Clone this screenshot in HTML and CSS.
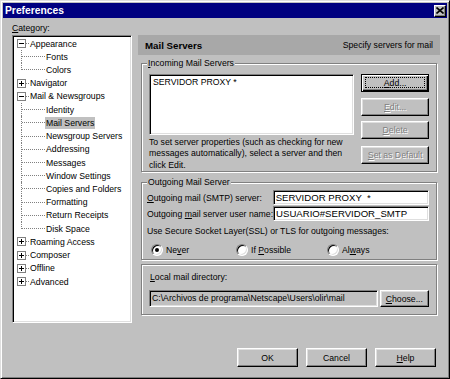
FILE: index.html
```html
<!DOCTYPE html>
<html lang="en">
<head>
    <meta charset="UTF-8">
    <title>Preferences</title>
    <link rel="stylesheet" href="styles.css">
</head>
<body>
    <div class="window">
        <div class="titlebar">
            <span class="title">Preferences</span>
            <span class="close-btn">
                <svg width="8" height="7" viewBox="0 0 8 7"><path d="M0.5 0.5l7 6M7.5 0.5l-7 6" stroke="#000" stroke-width="1.6"/></svg>
            </span>
        </div>

        <div class="content">
            <div class="sidebar">
                <div class="cat-label"><u>C</u>ategory:</div>
                <ul class="tree">
                    <li>
                        <div class="row"><svg class="box" width="9" height="9"><rect x=".5" y=".5" width="8" height="8" fill="#fff" stroke="#808080"/><path d="M2 4.5h5" stroke="#000"/></svg><span class="dash"></span><span class="lbl">Appearance</span></div>
                        <ul class="kids">
                            <li class="row"><span class="conn"><i></i></span><span class="lbl">Fonts</span></li>
                            <li class="row"><span class="conn"><i></i></span><span class="lbl">Colors</span></li>
                        </ul>
                    </li>
                    <li>
                        <div class="row"><svg class="box" width="9" height="9"><rect x=".5" y=".5" width="8" height="8" fill="#fff" stroke="#808080"/><path d="M2 4.5h5M4.5 2v5" stroke="#000"/></svg><span class="dash"></span><span class="lbl">Navigator</span></div>
                    </li>
                    <li>
                        <div class="row"><svg class="box" width="9" height="9"><rect x=".5" y=".5" width="8" height="8" fill="#fff" stroke="#808080"/><path d="M2 4.5h5" stroke="#000"/></svg><span class="dash"></span><span class="lbl">Mail &amp; Newsgroups</span></div>
                        <ul class="kids">
                            <li class="row"><span class="conn"><i></i></span><span class="lbl">Identity</span></li>
                            <li class="row"><span class="conn"><i></i></span><span class="lbl selected">Mail Servers</span></li>
                            <li class="row"><span class="conn"><i></i></span><span class="lbl">Newsgroup Servers</span></li>
                            <li class="row"><span class="conn"><i></i></span><span class="lbl">Addressing</span></li>
                            <li class="row"><span class="conn"><i></i></span><span class="lbl">Messages</span></li>
                            <li class="row"><span class="conn"><i></i></span><span class="lbl">Window Settings</span></li>
                            <li class="row"><span class="conn"><i></i></span><span class="lbl">Copies and Folders</span></li>
                            <li class="row"><span class="conn"><i></i></span><span class="lbl">Formatting</span></li>
                            <li class="row"><span class="conn"><i></i></span><span class="lbl">Return Receipts</span></li>
                            <li class="row"><span class="conn"><i></i></span><span class="lbl">Disk Space</span></li>
                        </ul>
                    </li>
                    <li>
                        <div class="row"><svg class="box" width="9" height="9"><rect x=".5" y=".5" width="8" height="8" fill="#fff" stroke="#808080"/><path d="M2 4.5h5M4.5 2v5" stroke="#000"/></svg><span class="dash"></span><span class="lbl">Roaming Access</span></div>
                    </li>
                    <li>
                        <div class="row"><svg class="box" width="9" height="9"><rect x=".5" y=".5" width="8" height="8" fill="#fff" stroke="#808080"/><path d="M2 4.5h5M4.5 2v5" stroke="#000"/></svg><span class="dash"></span><span class="lbl">Composer</span></div>
                    </li>
                    <li>
                        <div class="row"><svg class="box" width="9" height="9"><rect x=".5" y=".5" width="8" height="8" fill="#fff" stroke="#808080"/><path d="M2 4.5h5M4.5 2v5" stroke="#000"/></svg><span class="dash"></span><span class="lbl">Offline</span></div>
                    </li>
                    <li>
                        <div class="row"><svg class="box" width="9" height="9"><rect x=".5" y=".5" width="8" height="8" fill="#fff" stroke="#808080"/><path d="M2 4.5h5M4.5 2v5" stroke="#000"/></svg><span class="dash"></span><span class="lbl">Advanced</span></div>
                    </li>
                </ul>
            </div>

            <div class="main">
                <div class="page-head">
                    <span class="page-title">Mail Servers</span>
                    <span class="page-desc">Specify servers for mail</span>
                </div>

                <div class="group incoming">
                    <div class="legend"><u>I</u>ncoming Mail Servers</div>
                    <div class="incoming-body">
                        <div class="incoming-left">
                            <div class="listbox">SERVIDOR PROXY *</div>
                            <p class="hint">To set server properties (such as checking for new messages automatically), select a server and then click Edit.</p>
                        </div>
                        <div class="side-buttons">
                            <div class="btn default btn-add"><span class="focus"><span><u>A</u>dd...</span></span></div>
                            <div class="btn disabled btn-edit"><span><u>E</u>dit...</span></div>
                            <div class="btn disabled btn-delete"><span><u>D</u>elete</span></div>
                            <div class="btn disabled btn-setdef"><span><u>S</u>et as Default</span></div>
                        </div>
                    </div>
                </div>

                <div class="group outgoing">
                    <div class="legend">Outgoing Mail Server</div>
                    <div class="field-row first">
                        <span class="field-label"><u>O</u>utgoing mail (SMTP) server:</span>
                        <span class="textbox">SERVIDOR PROXY &nbsp;*</span>
                    </div>
                    <div class="field-row">
                        <span class="field-label">Outgoing <u>m</u>ail server user name:</span>
                        <span class="textbox">USUARIO#SERVIDOR_SMTP</span>
                    </div>
                    <div class="ssl-text">Use Secure Socket Layer(SSL) or TLS for outgoing messages:</div>
                    <div class="radio-row">
                        <span class="radio-opt opt-never"><span class="radio checked"><span class="dot"></span></span><span>Ne<u>v</u>er</span></span>
                        <span class="radio-opt opt-possible"><span class="radio"></span><span>If <u>P</u>ossible</span></span>
                        <span class="radio-opt"><span class="radio"></span><span>Al<u>w</u>ays</span></span>
                    </div>
                </div>

                <div class="group local">
                    <div class="local-label"><u>L</u>ocal mail directory:</div>
                    <div class="local-row">
                        <span class="pathbox">C:\Archivos de programa\Netscape\Users\olir\mail</span>
                        <div class="btn btn-choose"><span><u>C</u>hoose...</span></div>
                    </div>
                </div>
            </div>
        </div>

        <div class="footer">
            <div class="btn btn-foot">OK</div>
            <div class="btn btn-foot">Cancel</div>
            <div class="btn btn-foot"><span><u>H</u>elp</span></div>
        </div>
    </div>
</body>
</html>
```

FILE: styles.css
```css
* {
    box-sizing: border-box;
}

body {
    margin: 0;
    background-color: #c0c0c0;
    font-family: 'Liberation Sans', Arial, sans-serif;
    font-size: 8.7px;
    color: #000;
}

u {
    text-decoration-thickness: 1px;
    text-underline-offset: 1px;
}

.window {
    width: 450px;
    height: 379px;
    border: 1px solid;
    border-color: #dfdfdf #000 #000 #dfdfdf;
    box-shadow: inset 1px 1px #fff, inset -1px -1px #808080;
    padding: 2px;
    display: flex;
    flex-direction: column;
}

/* title bar */
.titlebar {
    height: 15px;
    background-color: #000080;
    display: flex;
    align-items: center;
    justify-content: space-between;
    padding: 0 1px 0 2px;
}

.title {
    color: #fff;
    font-weight: bold;
    font-size: 10.3px;
}

.close-btn {
    width: 12px;
    height: 12px;
    background-color: #c0c0c0;
    border: 1px solid;
    border-color: #fff #000 #000 #fff;
    box-shadow: inset -1px -1px #808080;
    display: flex;
    align-items: center;
    justify-content: center;
}

.content {
    display: flex;
    padding-left: 9px;
    height: 305px;
}

/* category tree */
.sidebar {
    width: 120px;
}

.cat-label {
    height: 17px;
    padding-top: 4px;
    line-height: 12px;
}

.tree {
    list-style: none;
    margin: 0;
    padding: 0;
    height: 288px;
    background-color: #fff;
    border: 1px solid;
    border-color: #808080 #fff #fff #808080;
    box-shadow: inset 1px 1px #000, inset -1px -1px #dfdfdf;
    padding-top: 1px;
    padding-left: 1px;
}

.tree ul {
    list-style: none;
    margin: 0;
    padding: 0;
}

.row {
    height: 13.22px;
    display: flex;
    align-items: center;
    white-space: nowrap;
}

.box {
    margin-left: 3px;
    flex: none;
}

.dash {
    width: 3px;
    border-top: 1px dotted #808080;
}

.lbl {
    padding: 0 1px;
    line-height: 12px;
}

.lbl.selected {
    background-color: #c0c0c0;
}

.conn {
    margin-left: 7px;
    width: 24px;
    height: 100%;
    border-left: 1px dotted #808080;
    align-self: flex-start;
}

.conn i {
    display: block;
    height: 7px;
    border-bottom: 1px dotted #808080;
}

.kids li:last-child .conn {
    height: 7px;
}

/* right side */
.main {
    margin-left: 6px;
    width: 302px;
    padding-top: 17px;
}

.page-head {
    height: 20px;
    background-color: #a8a8a8;
    display: flex;
    align-items: center;
    justify-content: space-between;
    padding: 0 7px;
}

.page-title {
    font-weight: bold;
    font-size: 9.7px;
}

.group {
    margin: 8px 3px 0 3px;
    border: 1px solid #808080;
    box-shadow: inset 1px 1px #fff, 1px 1px #fff;
    padding: 0 7px 0 5px;
}

.legend {
    margin-top: -7px;
    width: fit-content;
    height: 12px;
    line-height: 12px;
    padding: 0 1px;
    background-color: #c0c0c0;
}

.incoming-body {
    display: flex;
    margin-top: 5px;
    padding-left: 2px;
}

.incoming-left {
    width: 206px;
}

.listbox {
    height: 61px;
    background-color: #fff;
    border: 1px solid;
    border-color: #808080 #fff #fff #808080;
    box-shadow: inset 1px 1px #000, inset -1px -1px #dfdfdf;
    padding: 2px 3px;
    line-height: 11px;
}

.hint {
    margin: 2px 0 0 0;
    line-height: 11.4px;
}

.side-buttons {
    margin-left: 7px;
    width: 68px;
}

.btn {
    height: 18px;
    background-color: #c0c0c0;
    border: 1px solid;
    border-color: #fff #000 #000 #fff;
    box-shadow: inset -1px -1px #808080, inset 1px 1px #dfdfdf;
    display: flex;
    align-items: center;
    justify-content: center;
    white-space: nowrap;
}

.btn.default {
    border-color: #000;
    box-shadow: inset 1px 1px #fff, inset -1px -1px #000, inset -2px -2px #808080;
    padding: 2px 3px 3px 3px;
}

.focus {
    width: 100%;
    height: 100%;
    border: 1px dotted #000;
    display: flex;
    align-items: center;
    justify-content: center;
}

.btn.disabled {
    color: #808080;
    text-shadow: 1px 1px 0 #fff;
}

.btn-edit {
    margin-top: 6px;
}

.btn-delete {
    margin-top: 5px;
}

.btn-setdef {
    margin-top: 7px;
}

/* outgoing server */
.outgoing {
    margin-top: 10px;
    padding-bottom: 2px;
}

.field-row {
    display: flex;
    align-items: center;
    margin-top: 1px;
}

.field-row.first {
    margin-top: 2px;
}

.field-label {
    width: 127px;
    white-space: nowrap;
}

.textbox {
    width: 158px;
    height: 15px;
    background-color: #fff;
    border: 1px solid;
    border-color: #808080 #fff #fff #808080;
    box-shadow: inset 1px 1px #000, inset -1px -1px #dfdfdf;
    padding: 0 2px;
    font-size: 9.6px;
    line-height: 13px;
    white-space: nowrap;
}

.ssl-text {
    margin-top: 4px;
    line-height: 12px;
}

.radio-row {
    display: flex;
    align-items: center;
    height: 14px;
    margin-top: 6px;
    padding-left: 4px;
}

.radio-opt {
    display: flex;
    align-items: center;
    gap: 3px;
}

.opt-never {
    width: 85px;
}

.opt-possible {
    width: 91px;
}

.radio {
    width: 12px;
    height: 12px;
    border-radius: 50%;
    background-color: #fff;
    border: 1px solid;
    border-color: #808080 #fff #fff #808080;
    box-shadow: inset 1px 1px #000, inset -1px -1px #dfdfdf;
    display: flex;
    align-items: center;
    justify-content: center;
}

.dot {
    width: 4px;
    height: 4px;
    border-radius: 50%;
    background-color: #000;
}

/* local directory */
.local {
    margin-top: 4px;
    padding: 6px 7px 7px 7px;
}

.local-label {
    line-height: 12px;
    padding-left: 1px;
}

.local-row {
    display: flex;
    margin-top: 7px;
}

.pathbox {
    width: 232px;
    height: 17px;
    border: 1px solid;
    border-color: #808080 #fff #fff #808080;
    box-shadow: inset 1px 1px #000, inset -1px -1px #dfdfdf;
    padding: 0 2px;
    line-height: 15px;
    white-space: nowrap;
    overflow: hidden;
}

.btn-choose {
    margin-left: 2px;
    width: 50px;
    height: 17px;
}

/* dialog buttons */
.footer {
    display: flex;
    justify-content: flex-end;
    gap: 8px;
    padding: 25px 11px 0 0;
}

.btn-foot {
    width: 61px;
    height: 19px;
}
```
